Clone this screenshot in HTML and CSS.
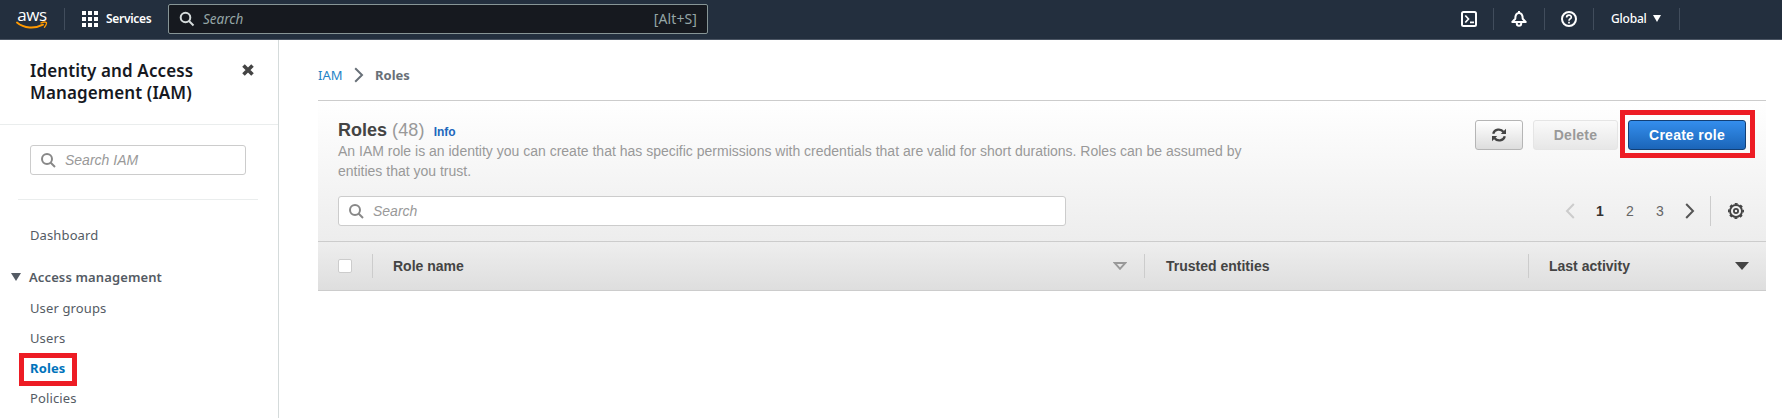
FILE: index.html
```html
<!DOCTYPE html>
<html lang="en">
<head>
<meta charset="utf-8">
<title>IAM - Roles</title>
<link rel="stylesheet" href="styles.css">
</head>
<body>
<header class="topbar">
  <div class="logo"><span class="logo-text">aws</span>
    <svg class="smile" width="32" height="9" viewBox="0 0 32 9"><path d="M1 1.500C8 7.500 19 8 27 3.700" fill="none" stroke="#f90" stroke-width="1.900" stroke-linecap="round"/><path d="M25 1.900C27 1 29.500 .900 30.400 1.500C30.800 2.800 29.800 4.800 28.500 6.300" fill="none" stroke="#f90" stroke-width="1.300" stroke-linecap="round"/></svg>
  </div>
  <i class="bar bar-logo"></i>
  <svg class="grid-icon" width="16" height="16" viewBox="0 0 16 16" fill="#fff"><path d="M0 0h4v4H0zM6 0h4v4H6zM12 0h4v4h-4zM0 6h4v4H0zM6 6h4v4H6zM12 6h4v4h-4zM0 12h4v4H0zM6 12h4v4H6zM12 12h4v4h-4z"/></svg>
  <span class="services">Services</span>
  <div class="top-search">
    <svg width="16" height="16" viewBox="0 0 16 16" fill="none" stroke="#d5dbdb" stroke-width="2"><circle cx="6.500" cy="6.500" r="4.800"/><path d="M10 10l4.500 4.500"/></svg>
    <span class="top-placeholder">Search</span><span class="shortcut">[Alt+S]</span>
  </div>
  <nav class="tools">
    <span class="tool tool-shell"><svg width="16" height="16" viewBox="0 0 16 16" fill="none" stroke="#fff" stroke-width="2"><rect x="1" y="1" width="14" height="14" rx="1.500"/><path d="M4.300 4.500L7.500 8L4.300 11.500M9 11.300h4" stroke-width="1.700"/></svg></span>
    <span class="tool tool-bell"><svg width="16" height="16" viewBox="0 0 16 16" fill="none" stroke="#fff" stroke-width="2" stroke-linejoin="round"><path d="M8 0v2M1.300 11L4.300 7.800C4.300 4 5.500 2 8 2s3.700 2 3.700 5.800L14.700 11z"/><path d="M5.800 11.500v1a2.200 2.200 0 0 0 4.400 0v-1"/></svg></span>
    <span class="tool tool-help"><svg width="16" height="16" viewBox="0 0 16 16" fill="none" stroke="#fff" stroke-width="2"><circle cx="8" cy="8" r="7"/><path d="M5.600 6.500C5.600 3.500 10.300 3.500 10.300 6.200C10.300 8 8 7.600 8 9.700M8 10.700v1.800" stroke-width="1.700"/></svg></span>
    <span class="tool tool-region"><span class="region">Global</span><svg width="8" height="7" viewBox="0 0 8 7"><path d="M0 0h8L4 7z" fill="#fff"/></svg></span>
  </nav>
</header>
<div class="layout">
  <aside class="sidebar">
    <div class="side-head">
      <h1 class="side-title">Identity and Access<br>Management (IAM)</h1>
      <svg class="close" width="12" height="12" viewBox="0 0 12 12"><path d="M1.500 1.500l9 9M10.500 1.500l-9 9" stroke="#444" stroke-width="3.600"/></svg>
    </div>
    <div class="input side-input">
      <svg width="15" height="15" viewBox="0 0 15 15" fill="none" stroke="#888" stroke-width="2"><circle cx="6" cy="6" r="5"/><path d="M9.500 9.500l4.500 4.500"/></svg>
      <span>Search IAM</span>
    </div>
    <hr class="side-rule">
    <ul class="menu">
      <li class="item dashboard">Dashboard</li>
      <li class="item group"><svg width="10" height="8" viewBox="0 0 10 8"><path d="M0 0h10L5 8z" fill="#545b64"/></svg><span>Access management</span></li>
      <li class="item">User groups</li>
      <li class="item">Users</li>
      <li class="item active">Roles<i class="mark mark-roles"></i></li>
      <li class="item">Policies</li>
    </ul>
  </aside>
  <main class="main">
    <div class="crumbs"><a class="crumb-link">IAM</a>
      <svg width="10" height="16" viewBox="0 0 10 16"><path d="M1.200 1.200L8 8l-6.800 6.800" fill="none" stroke="#687078" stroke-width="2"/></svg>
      <b class="crumb-now">Roles</b></div>
    <section class="panel">
      <div class="panel-top">
        <div class="heading">
          <h2 class="title">Roles <span class="count">(48)</span><a class="info">Info</a></h2>
          <p class="desc">An IAM role is an identity you can create that has specific permissions with credentials that are valid for short durations. Roles can be assumed by<br>entities that you trust.</p>
        </div>
        <div class="actions">
          <span class="btn refresh"><svg width="14" height="14" viewBox="0 0 14 14" fill="none" stroke="#444" stroke-width="2.300"><path d="M1.200 5.800C2.500 1 8.800.200 11.500 4M12.800 8.200C11.500 13 5.200 13.800 2.500 10"/><path d="M14 .800v5.200H8.800zM0 13.200V8h5.200z" fill="#444" stroke="none"/></svg></span>
          <span class="btn delete">Delete</span>
          <span class="btn create">Create role<i class="mark mark-create"></i></span>
        </div>
      </div>
      <div class="filters">
        <div class="input role-input">
          <svg width="15" height="15" viewBox="0 0 15 15" fill="none" stroke="#888" stroke-width="2"><circle cx="6" cy="6" r="5"/><path d="M9.500 9.500l4.500 4.500"/></svg>
          <span>Search</span>
        </div>
        <div class="pages">
          <svg class="prev" width="10" height="16" viewBox="0 0 10 16"><path d="M8.800 1L2 8l6.800 7" fill="none" stroke="#ccc" stroke-width="2"/></svg>
          <span class="page current">1</span><span class="page">2</span><span class="page">3</span>
          <svg class="next" width="10" height="16" viewBox="0 0 10 16"><path d="M1.200 1L8 8l-6.800 7" fill="none" stroke="#555" stroke-width="2"/></svg>
          <i class="page-rule"></i>
          <svg width="16" height="16" viewBox="0 0 16 16" fill="none" stroke="#444"><circle cx="8" cy="8" r="6" stroke-width="1.900"/><circle cx="8" cy="8" r="7.200" stroke-width="1.600" stroke-dasharray="2.900 2.755" stroke-dashoffset="1.450"/><circle cx="8" cy="8" r="2.100" stroke-width="1.800"/></svg>
        </div>
      </div>
      <div class="table-head">
        <div class="cell check"><i class="box"></i></div>
        <div class="cell name">Role name<svg width="14" height="8" viewBox="0 0 14 8"><path d="M1.700 1h10.600L7 6.800z" fill="none" stroke="#999" stroke-width="1.900"/></svg></div>
        <div class="cell trusted">Trusted entities</div>
        <div class="cell last">Last activity<svg width="14" height="8" viewBox="0 0 14 8"><path d="M0 0h14L7 8z" fill="#444"/></svg></div>
      </div>
    </section>
  </main>
</div>
</body>
</html>
```
FILE: styles.css
```css
* { box-sizing: border-box; }
body { margin: 0; height: 418px; overflow: hidden; background: #fff; font-family: "Noto Sans", sans-serif; color: #545b64; }
svg { display: block; flex: none; }
.topbar { display: flex; align-items: center; height: 40px; padding-bottom: 2px; background: #232f3e; border-bottom: 1px solid #4b5563; color: #fff; font-size: 13px; }
.logo { width: 32px; margin-left: 16px; display: flex; flex-direction: column; align-items: center; }
.logo-text { font: 500 17px/13px "Open Sans", sans-serif; height: 13px; letter-spacing: -.4px; }
.bar { width: 1px; height: 22px; background: #414d5c; }
.bar-logo { margin-left: 16px; }
.grid-icon { margin-left: 17px; }
.services { margin-left: 8px; width: 62px; font-size: 12px; font-weight: 600; white-space: nowrap; letter-spacing: -.3px; }
.top-search { display: flex; align-items: center; width: 540px; height: 30px; padding: 0 10px; background: #16191f; border: 1px solid #879596; border-radius: 2px; color: #95a5a6; }
.top-placeholder { margin-left: 8px; font-size: 13.5px; font-style: italic; flex: 1; }
.shortcut { font-size: 14px; letter-spacing: .1px; }
.tools { display: flex; margin-left: 736px; }
.tool { display: flex; align-items: center; height: 22px; border-right: 1px solid #414d5c; }
.tool-shell { width: 50px; padding-left: 17px; }
.tool-bell { width: 51px; padding-left: 17px; }
.tool-help { width: 49px; padding-left: 16px; }
.tool-region { width: 86px; padding-left: 17px; gap: 6px; font-size: 12px; }
.region { width: 36px; font-weight: 500; letter-spacing: -.2px; }
.layout { display: flex; height: 378px; }
.sidebar { width: 279px; border-right: 1px solid #d5dbdb; }
.side-head { display: flex; justify-content: space-between; height: 85px; padding: 20px 24px 0 30px; border-bottom: 1px solid #eaeded; }
.side-title { margin: 0; font-size: 17px; line-height: 22px; font-weight: 600; letter-spacing: .11px; color: #16191f; white-space: nowrap; }
.close { margin-top: 4px; }
.input { display: flex; align-items: center; height: 30px; border: 1px solid #ccc; border-radius: 3px; background: #fff; color: #999; font: italic 14px "Liberation Sans", sans-serif; }
.side-input { margin: 20px 32px 0 30px; padding-left: 10px; gap: 9px; }
.side-rule { margin: 24px 20px 0 18px; border: 0; height: 1px; background: #eaeded; }
.menu { margin: 20px 0 0; padding: 0 0 0 30px; list-style: none; font-size: 13px; letter-spacing: .12px; }
.item { position: relative; height: 30px; line-height: 30px; white-space: nowrap; }
.dashboard { height: 41px; }
.group { display: flex; align-items: center; gap: 8px; height: 32px; padding-bottom: 1px; margin-left: -19px; font-weight: 600; }
.active { width: 36px; color: #0073bb; font-weight: 700; }
.mark { position: absolute; border: 5px solid #ed1c24; }
.mark-roles { left: -11px; top: 0; width: 58px; height: 33px; }
.main { flex: 1; padding: 0 16px 0 39px; }
.crumbs { display: flex; align-items: center; height: 60px; padding-top: 10px; font-size: 13px; }
.crumb-link { width: 36px; color: #1f83c5; }
.crumb-now { margin-left: 11px; color: #687078; }
.panel { border-top: 1px solid #ccc; font-family: "Liberation Sans", sans-serif; background: linear-gradient(#fff, #ededed 140px); }
.panel-top { display: flex; justify-content: space-between; height: 95px; padding: 0 20px; }
.title { margin: 17px 0 0; font-size: 18px; line-height: 24px; color: #444; }
.count { color: #999; font-weight: 400; letter-spacing: .15px; }
.info { margin-left: 9px; color: #2068bd; font-size: 12px; }
.desc { margin: -3px 0 0; font-size: 14px; line-height: 20px; color: #999; white-space: nowrap; }
.actions { display: flex; gap: 10px; padding-top: 19px; }
.btn { position: relative; display: flex; align-items: center; justify-content: center; height: 30px; border: 1px solid #b5b5b5; border-radius: 3px; font-size: 14px; font-weight: 700; letter-spacing: .25px; background: linear-gradient(#fff, #ddd); }
.refresh { width: 48px; }
.delete { width: 85px; color: #999; border-color: #e5e5e5; background: linear-gradient(#fafafa, #e7e7e7); }
.create { width: 118px; color: #fff; border-color: #123f75; background: linear-gradient(#348eed, #1b65b8); }
.mark-create { left: -9px; top: -11px; width: 135px; height: 48px; }
.filters { display: flex; justify-content: space-between; height: 45px; padding: 0 22px 0 20px; }
.role-input { width: 728px; padding-left: 10px; gap: 9px; }
.pages { display: flex; align-items: center; height: 30px; font-size: 14px; color: #666; }
.prev { margin-right: 10px; }
.page { width: 30px; text-align: center; }
.current { color: #333; font-weight: 700; }
.next { margin-left: 10px; }
.page-rule { width: 1px; height: 30px; margin: 0 17px 0 15px; background: #ccc; }
.table-head { display: flex; align-items: center; height: 50px; border: solid #ccc; border-width: 1px 0; background: linear-gradient(#eee, #dedede); color: #444; font-size: 14px; font-weight: 700; }
.cell { display: flex; align-items: center; justify-content: space-between; height: 24px; }
.cell + .cell { border-left: 1px solid #ccc; padding-left: 20px; }
.check { width: 54px; padding-left: 20px; }
.box { width: 14px; height: 14px; border: 1px solid #ccc; border-radius: 2px; background: #fff; }
.name { width: 772px; padding-right: 17px; }
.cell.trusted { width: 384px; padding-left: 21px; }
.last { flex: 1; padding-right: 17px; }
```
